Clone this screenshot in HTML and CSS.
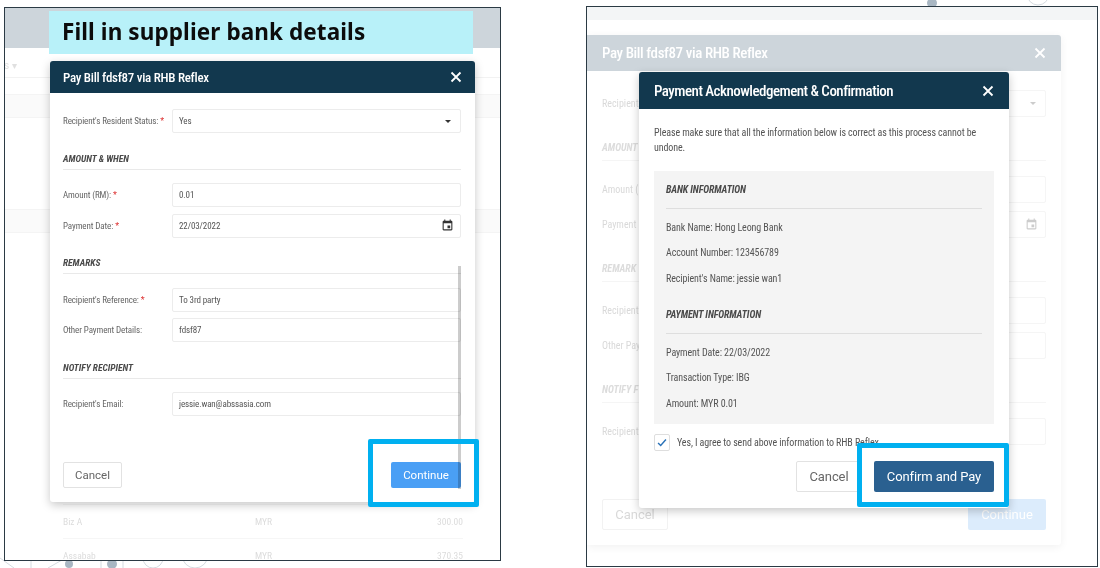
FILE: index.html
```html
<!DOCTYPE html>
<html lang="en">
<head>
<meta charset="utf-8">
<title>Pay Bill via RHB Reflex</title>
<link rel="stylesheet" href="styles.css">
</head>
<body>
<div class="canvas">
  <svg class="decor" width="1100" height="568" viewBox="0 0 1100 568" fill="none">
    <g stroke="#d5dbe0">
      <path d="M0 558l14 10M31 560v8M48 568l14-8 7 1M101 560v8M123 560v8"/>
      <circle cx="153" cy="558" r="10"/>
      <circle cx="195" cy="555" r="13"/>
      <circle cx="1038" cy="-6" r="11"/>
    </g>
    <g fill="#a9b7c3">
      <circle cx="69" cy="564" r="4"/>
      <circle cx="112" cy="564" r="5"/>
      <circle cx="932" cy="3" r="5"/>
    </g>
  </svg>

  <section class="shot shot-left">
    <div class="band"></div>
    <div class="bg-nav"><span>s ▾</span><span>Contacts</span><span>Reports</span><span>MPOA</span><span>Control Panel</span></div>
    <div class="bg-stripe s1"></div>
    <div class="bg-stripe s2"></div>
    <div class="bg-table">
      <div class="bg-tr"><span>Biz A</span><span>MYR</span><span>300.00</span></div>
      <div class="bg-tr"><span>Assabab</span><span>MYR</span><span>370.35</span></div>
    </div>
  </section>

  <div class="banner">Fill in supplier bank details</div>

  <section class="modal modal-bill">
    <header class="modal-head"><h2>Pay Bill fdsf87 via RHB Reflex</h2><svg class="close" viewBox="0 0 12 12"><path d="M1.500 1.500l9 9M10.500 1.500l-9 9"/></svg></header>
    <div class="form">
      <div class="row"><label>Recipient's Resident Status: <i>*</i></label><div class="field">Yes<b class="caret"></b></div></div>
      <h3 class="sect">AMOUNT &amp; WHEN</h3>
      <div class="row"><label>Amount (RM): <i>*</i></label><div class="field">0.01</div></div>
      <div class="row"><label>Payment Date: <i>*</i></label><div class="field">22/03/2022<svg class="cal" viewBox="0 0 24 24"><path d="M17 12h-5v5h5v-5zM16 1v2H8V1H6v2H5c-1.110 0-1.990.9-1.990 2L3 19c0 1.100.89 2 2 2h14c1.100 0 2-.9 2-2V5c0-1.100-.9-2-2-2h-1V1h-2zm3 18H5V8h14v11z"/></svg></div></div>
      <h3 class="sect">REMARKS</h3>
      <div class="row"><label>Recipient's Reference: <i>*</i></label><div class="field">To 3rd party</div></div>
      <div class="row"><label>Other Payment Details:</label><div class="field">fdsf87</div></div>
      <h3 class="sect">NOTIFY RECIPIENT</h3>
      <div class="row"><label>Recipient's Email:</label><div class="field">jessie.wan@abssasia.com</div></div>
    </div>
    <footer class="foot foot-bill"><button class="btn ghost">Cancel</button><button class="btn primary">Continue</button></footer>
    <div class="scroll"></div>
  </section>
  <div class="mark mark-left"></div>

  <section class="shot shot-right">
    <div class="strip"></div>
    <div class="ghost-modal">
      <div class="ghost-head"><span>Pay Bill fdsf87 via RHB Reflex</span><svg class="close" viewBox="0 0 12 12"><path d="M1.500 1.500l9 9M10.500 1.500l-9 9"/></svg></div>
      <div class="ghost-form">
        <div class="grow"><span>Recipient</span><div class="gfield"><b class="caret"></b></div></div>
        <h3>AMOUNT</h3>
        <div class="grow"><span>Amount (I</span><div class="gfield"></div></div>
        <div class="grow"><span>Payment</span><div class="gfield"><svg class="cal" viewBox="0 0 24 24"><path d="M17 12h-5v5h5v-5zM16 1v2H8V1H6v2H5c-1.110 0-1.990.9-1.990 2L3 19c0 1.100.89 2 2 2h14c1.100 0 2-.9 2-2V5c0-1.100-.9-2-2-2h-1V1h-2zm3 18H5V8h14v11z"/></svg></div></div>
        <h3>REMARK</h3>
        <div class="grow"><span>Recipient</span><div class="gfield"></div></div>
        <div class="grow"><span>Other Pay</span><div class="gfield"></div></div>
        <h3>NOTIFY F</h3>
        <div class="grow"><span>Recipient</span><div class="gfield"></div></div>
      </div>
      <div class="ghost-foot"><span class="gbtn">Cancel</span><span class="gbtn blue">Continue</span></div>
    </div>
  </section>

  <section class="modal modal-ack">
    <header class="modal-head"><h2>Payment Acknowledgement &amp; Confirmation</h2><svg class="close" viewBox="0 0 12 12"><path d="M1.500 1.500l9 9M10.500 1.500l-9 9"/></svg></header>
    <div class="ack-body">
      <p class="intro">Please make sure that all the information below is correct as this process cannot be undone.</p>
      <div class="panel">
        <h3 class="sect">BANK INFORMATION</h3>
        <p>Bank Name: Hong Leong Bank</p>
        <p>Account Number: 123456789</p>
        <p>Recipient's Name: jessie wan1</p>
        <h3 class="sect second">PAYMENT INFORMATION</h3>
        <p>Payment Date: 22/03/2022</p>
        <p>Transaction Type: IBG</p>
        <p>Amount: MYR 0.01</p>
      </div>
      <div class="agree"><span class="check"><svg viewBox="0 0 16 16"><path d="M3.500 8.500l3 3 6-7"/></svg></span>Yes, I agree to send above information to RHB Reflex</div>
    </div>
    <footer class="foot foot-ack"><button class="btn ghost">Cancel</button><button class="btn dark">Confirm and Pay</button></footer>
  </section>
  <div class="mark mark-right"></div>
</div>
</body>
</html>
```
FILE: styles.css
```css
* { box-sizing: border-box; }
html, body { margin: 0; padding: 0; background: #fff; }
body { font-family: Roboto, "Liberation Sans", sans-serif; color: #555; overflow: hidden; }
h2, h3, p { margin: 0; }

.canvas { position: relative; width: 1100px; height: 568px; overflow: hidden; background: #fff; filter: blur(0.35px); }
.decor { position: absolute; left: 0; top: 0; }

.shot { position: absolute; background: #fff; border: 1.5px solid #2b3a44; overflow: hidden; }
.shot-left { left: 4px; top: 7px; width: 497px; height: 554px; }
.shot-right { left: 586px; top: 6px; width: 512px; height: 561px; }

.band { height: 40px; background: #cdd5db; }
.bg-nav { height: 30px; padding-top: 5px; display: flex; gap: 30px; align-items: center; border-bottom: 1px solid #f2f2f2; font-size: 10px; color: #e0e0e0; margin-left: -1px; }
.bg-nav span:nth-child(2) { margin-left: 6px; }
.bg-stripe { position: absolute; left: 0; right: 0; height: 24px; background: #fafafa; border-top: 1px solid #f4f4f4; border-bottom: 1px solid #f4f4f4; }
.s1 { top: 86px; }
.s2 { top: 201px; }
.bg-table { position: absolute; left: 58px; right: 37px; bottom: -12px; font-size: 9.500px; font-stretch: 85%; color: #dcdcdc; }
.bg-tr { display: grid; grid-template-columns: 192px 1fr 60px; height: 34px; align-items: center; border-top: 1px solid #f6f6f6; }
.bg-tr span:last-child { text-align: right; }

.banner { position: absolute; left: 49px; top: 11px; width: 424px; height: 43px; padding-left: 13px; background: #b8f1f9; color: #0c0c0c; font: 700 22.500px/41px "Noto Sans", sans-serif; letter-spacing: .1px; }

.modal { position: absolute; background: #fff; border-radius: 3px; box-shadow: 0 3px 10px rgba(0,0,0,.22); display: flex; flex-direction: column; }
.modal-bill { left: 50px; top: 61px; width: 425px; height: 441px; }
.modal-ack { left: 639px; top: 72px; width: 370px; height: 436px; }

.modal-head { display: flex; align-items: center; justify-content: space-between; background: #12384e; color: #fff; border-radius: 3px 3px 0 0; }
.modal-bill .modal-head { height: 32px; padding: 0 13px; }
.modal-ack .modal-head { height: 37px; padding: 0 15px; }
.modal-head h2 { font-weight: 500; font-size: 13px; font-stretch: 85%; letter-spacing: -.27px; }
.modal-ack .modal-head h2 { font-size: 15px; letter-spacing: -.52px; }
.close { width: 12px; height: 12px; fill: none; stroke: #fff; stroke-width: 1.800; }

.form { padding: 16px 14px 0 13px; display: flex; flex-direction: column; gap: 6.500px; }
.row { display: flex; align-items: center; height: 24px; font-size: 9px; font-stretch: 85%; letter-spacing: -.1px; }
.row label { width: 109px; flex: none; color: #666; white-space: nowrap; }
.row i { color: #d33; font-style: normal; }
.field { flex: 1; height: 24px; padding: 0 6px; border: 1px solid #ececec; border-radius: 2px; display: flex; align-items: center; justify-content: space-between; color: #555; }
.caret { width: 0; height: 0; border: 3px solid transparent; border-top: 3px solid #333; border-bottom: 0; margin-right: 3px; }
.cal { width: 13px; height: 13px; fill: #333; }

.sect { font-size: 9.500px; font-stretch: 85%; font-style: italic; font-weight: 700; color: #4a4a4a; border-bottom: 1px solid #e9e9e9; height: 30px; line-height: 15px; padding-top: 11px; margin-bottom: 7px; }

.foot { display: flex; margin-top: auto; }
.foot-bill { justify-content: space-between; padding: 0 14px 14px 13px; }
.foot-ack { justify-content: flex-end; gap: 12px; padding: 0 15px 16px; }
.btn { font-family: Roboto, sans-serif; font-size: 11.500px; border-radius: 2px; padding: 0; cursor: pointer; }
.foot-bill .btn { height: 26px; }
.foot-ack .btn { height: 31px; font-size: 13px; letter-spacing: -.1px; }
.ghost { background: #fff; border: 1px solid #e2e2e2; color: #666; }
.foot-bill .ghost { width: 59px; }
.foot-ack .ghost { width: 66px; }
.primary { width: 70px; background: #4a9ff5; border: 0; color: #fff; }
.dark { width: 120px; background: #2a6090; border: 0; color: #fff; }
.scroll { position: absolute; left: 408px; top: 205px; width: 2.500px; height: 223px; background: rgba(0,0,0,.2); }

.mark { position: absolute; border: 5px solid #00b0f0; border-radius: 2px; }
.mark-left { left: 368px; top: 439px; width: 111px; height: 68px; }
.mark-right { left: 857px; top: 443px; width: 152px; height: 64px; }

.strip { height: 13px; background: #f3f5f6; }
.ghost-modal { position: absolute; left: 0; top: 28px; width: 474px; height: 510px; background: #fff; box-shadow: 0 2px 8px rgba(0,0,0,.06); border-radius: 0 3px 3px 0; }
.ghost-head { height: 36px; background: #cdd5db; color: #fff; display: flex; align-items: center; justify-content: space-between; padding: 0 15px; border-radius: 0 3px 0 0; font-size: 15px; font-stretch: 85%; font-weight: 500; letter-spacing: -.4px; }
.ghost-form { padding: 20px 15px 0; display: flex; flex-direction: column; gap: 10px; font-size: 10px; font-stretch: 85%; color: #d9d9d9; }
.ghost-form h3 { font-size: 10px; font-style: italic; font-weight: 700; color: #dcdcdc; height: 35px; line-height: 12px; padding-top: 16px; margin-bottom: 6px; border-bottom: 1px solid #f5f5f5; }
.grow { height: 25px; display: flex; align-items: center; justify-content: space-between; }
.gfield { width: 132px; height: 27px; flex: none; border: 1px solid #f5f5f5; border-radius: 2px; display: flex; align-items: center; justify-content: flex-end; padding-right: 7px; }
.ghost-form .caret { border-top-color: #ccc; margin-right: 2px; }
.ghost-form .cal { fill: #ccc; }
.ghost-foot { position: absolute; left: 15px; right: 15px; top: 464px; display: flex; justify-content: space-between; }
.gbtn { width: 66px; height: 31px; border: 1px solid #f2f2f2; border-radius: 2px; font-size: 13px; color: #d9d9d9; display: flex; align-items: center; justify-content: center; }
.gbtn.blue { width: 78px; background: #dcecfc; border: 0; color: #fff; }

.ack-body { padding: 16px 15px 0; font-size: 10px; font-stretch: 85%; letter-spacing: -.1px; color: #555; }
.intro { line-height: 15px; }
.panel { margin-top: 16px; height: 253px; padding: 11px 12px 0; background: #f4f4f4; }
.panel .sect { font-size: 10px; height: 27px; margin: 0 0 9.500px; padding-top: 0; border-bottom-color: #dedede; line-height: 15px; }
.panel .sect.second { margin-top: 12px; }
.panel p { height: 25.500px; line-height: 18px; font-size: 10px; }
.agree { display: flex; align-items: center; gap: 7px; margin-top: 10px; }
.check { width: 16px; height: 17px; background: #fff; border: 1px solid #dedede; border-radius: 2px; flex: none; }
.check svg { display: block; width: 14px; height: 15px; fill: none; stroke: #2a72b8; stroke-width: 1.600; }
```
